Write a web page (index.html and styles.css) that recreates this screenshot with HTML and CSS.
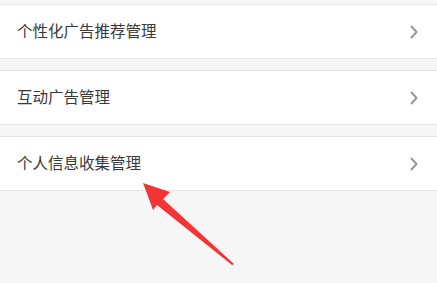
FILE: index.html
```html
<!DOCTYPE html>
<html lang="zh">
<head>
<meta charset="utf-8">
<link rel="stylesheet" href="styles.css">
</head>
<body>
<div class="page">
  <div class="list">
    <div class="row"><span class="label">个性化广告推荐管理</span><svg class="chev" viewBox="0 0 8 14" width="8" height="14"><path d="M1.5 1.5 L6.5 7 L1.5 12.5" fill="none" stroke="#999999" stroke-width="2" stroke-linecap="round" stroke-linejoin="round"/></svg></div>
    <div class="row"><span class="label">互动广告管理</span><svg class="chev" viewBox="0 0 8 14" width="8" height="14"><path d="M1.5 1.5 L6.5 7 L1.5 12.5" fill="none" stroke="#999999" stroke-width="2" stroke-linecap="round" stroke-linejoin="round"/></svg></div>
    <div class="row"><span class="label">个人信息收集管理</span><svg class="chev" viewBox="0 0 8 14" width="8" height="14"><path d="M1.5 1.5 L6.5 7 L1.5 12.5" fill="none" stroke="#999999" stroke-width="2" stroke-linecap="round" stroke-linejoin="round"/></svg></div>
  </div>
  <svg class="arrow" width="437" height="283" viewBox="0 0 437 283">
    <polygon points="143,183 170,192 163,199 234,264 232,265 157,205 153,210" fill="#f53535"/>
  </svg>
</div>
</body>
</html>
```
FILE: styles.css
```css
html, body {
  margin: 0;
  padding: 0;
  background: #f6f6f6;
}
.page {
  position: relative;
  width: 437px;
  height: 283px;
  overflow: hidden;
  font-family: "Noto Sans CJK SC", "Noto Sans", sans-serif;
}
.list {
  display: flex;
  flex-direction: column;
  gap: 11px;
  padding-top: 4px;
}
.row {
  box-sizing: border-box;
  height: 55px;
  background: #ffffff;
  border-top: 1px solid #e4e4e4;
  border-bottom: 1px solid #e4e4e4;
  display: flex;
  align-items: center;
  justify-content: space-between;
  padding: 0 19px 0 17px;
}
.label {
  font-size: 15.5px;
  color: #383838;
  line-height: 1;
  margin-top: -2px;
}
.chev {
  display: block;
}
.arrow {
  position: absolute;
  left: 0;
  top: 0;
  pointer-events: none;
}
```
